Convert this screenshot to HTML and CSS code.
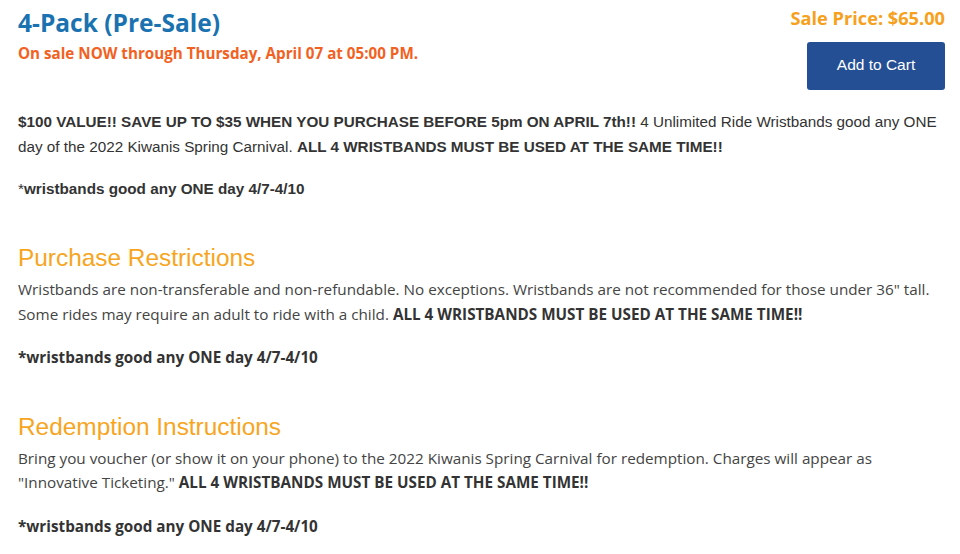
FILE: index.html
```html
<!DOCTYPE html>
<html>
<head>
<meta charset="utf-8">
<link rel="stylesheet" href="styles.css">
</head>
<body>
<div class="page">
  <header class="top">
    <div class="titles">
      <h1 class="title">4-Pack (Pre-Sale)</h1>
      <div class="sale-note">On sale NOW through Thursday, April 07 at 05:00 PM.</div>
    </div>
    <div class="buy">
      <div class="price">Sale Price: $65.00</div>
      <button class="cart">Add to Cart</button>
    </div>
  </header>
  <section class="desc">
    <p class="arial"><b>$100 VALUE!! SAVE UP TO $35 WHEN YOU PURCHASE BEFORE 5pm ON APRIL 7th!!</b> 4 Unlimited Ride Wristbands good any ONE day of the 2022 Kiwanis Spring Carnival. <b>ALL 4 WRISTBANDS MUST BE USED AT THE SAME TIME!!</b></p>
    <p class="arial">*<b>wristbands good any ONE day 4/7-4/10</b></p>
  </section>
  <section class="block">
    <h2 class="heading">Purchase Restrictions</h2>
    <p class="open">Wristbands are non-transferable and non-refundable. No exceptions. Wristbands are not recommended for those under 36" tall. Some rides may require an adult to ride with a child. <b>ALL 4 WRISTBANDS MUST BE USED AT THE SAME TIME!!</b></p>
    <p class="open"><b>*wristbands good any ONE day 4/7-4/10</b></p>
  </section>
  <section class="block">
    <h2 class="heading">Redemption Instructions</h2>
    <p class="open">Bring you voucher (or show it on your phone) to the 2022 Kiwanis Spring Carnival for redemption. Charges will appear as "Innovative Ticketing." <b>ALL 4 WRISTBANDS MUST BE USED AT THE SAME TIME!!</b></p>
    <p class="open"><b>*wristbands good any ONE day 4/7-4/10</b></p>
  </section>
</div>
</body>
</html>
```
FILE: styles.css
```css
html, body { margin: 0; padding: 0; background: #fff; }
.page { padding: 6px 15px 0 18px; }
.top { display: flex; justify-content: space-between; align-items: flex-start; }
.title {
  margin: 0;
  font-family: "Open Sans", sans-serif;
  font-weight: 700;
  font-size: 24.5px;
  line-height: 34px;
  color: #1a72b0;
}
.sale-note {
  margin-top: 3px;
  font-family: "Open Sans", sans-serif;
  font-weight: 700;
  font-size: 15.2px;
  line-height: 20px;
  color: #f2611f;
}
.buy { display: flex; flex-direction: column; align-items: flex-end; }
.price {
  font-family: "Open Sans", sans-serif;
  font-weight: 700;
  font-size: 18.2px;
  line-height: 24px;
  color: #f7a01c;
  margin-top: 0;
}
.cart {
  margin-top: 12px;
  width: 138px;
  height: 48px;
  padding: 0 0 3px 0;
  border: none;
  border-radius: 3px;
  background: #244f94;
  color: #fff;
  font-family: "Liberation Sans", Arial, sans-serif;
  font-size: 15.5px;
}
.desc { margin-top: 19px; }
p { margin: 0 0 17px 0; font-size: 15.25px; line-height: 25px; color: #333; }
.arial { font-family: "Liberation Sans", Arial, sans-serif; }
.open { font-family: "Open Sans", sans-serif; color: #444; line-height: 24.5px; margin-bottom: 19px; }
.open b { color: #333; }
.heading {
  margin: 42px 0 4px 0;
  font-family: "Liberation Sans", Arial, sans-serif;
  font-weight: 400;
  font-size: 24.4px;
  line-height: 30px;
  color: #f7a51e;
}
```
